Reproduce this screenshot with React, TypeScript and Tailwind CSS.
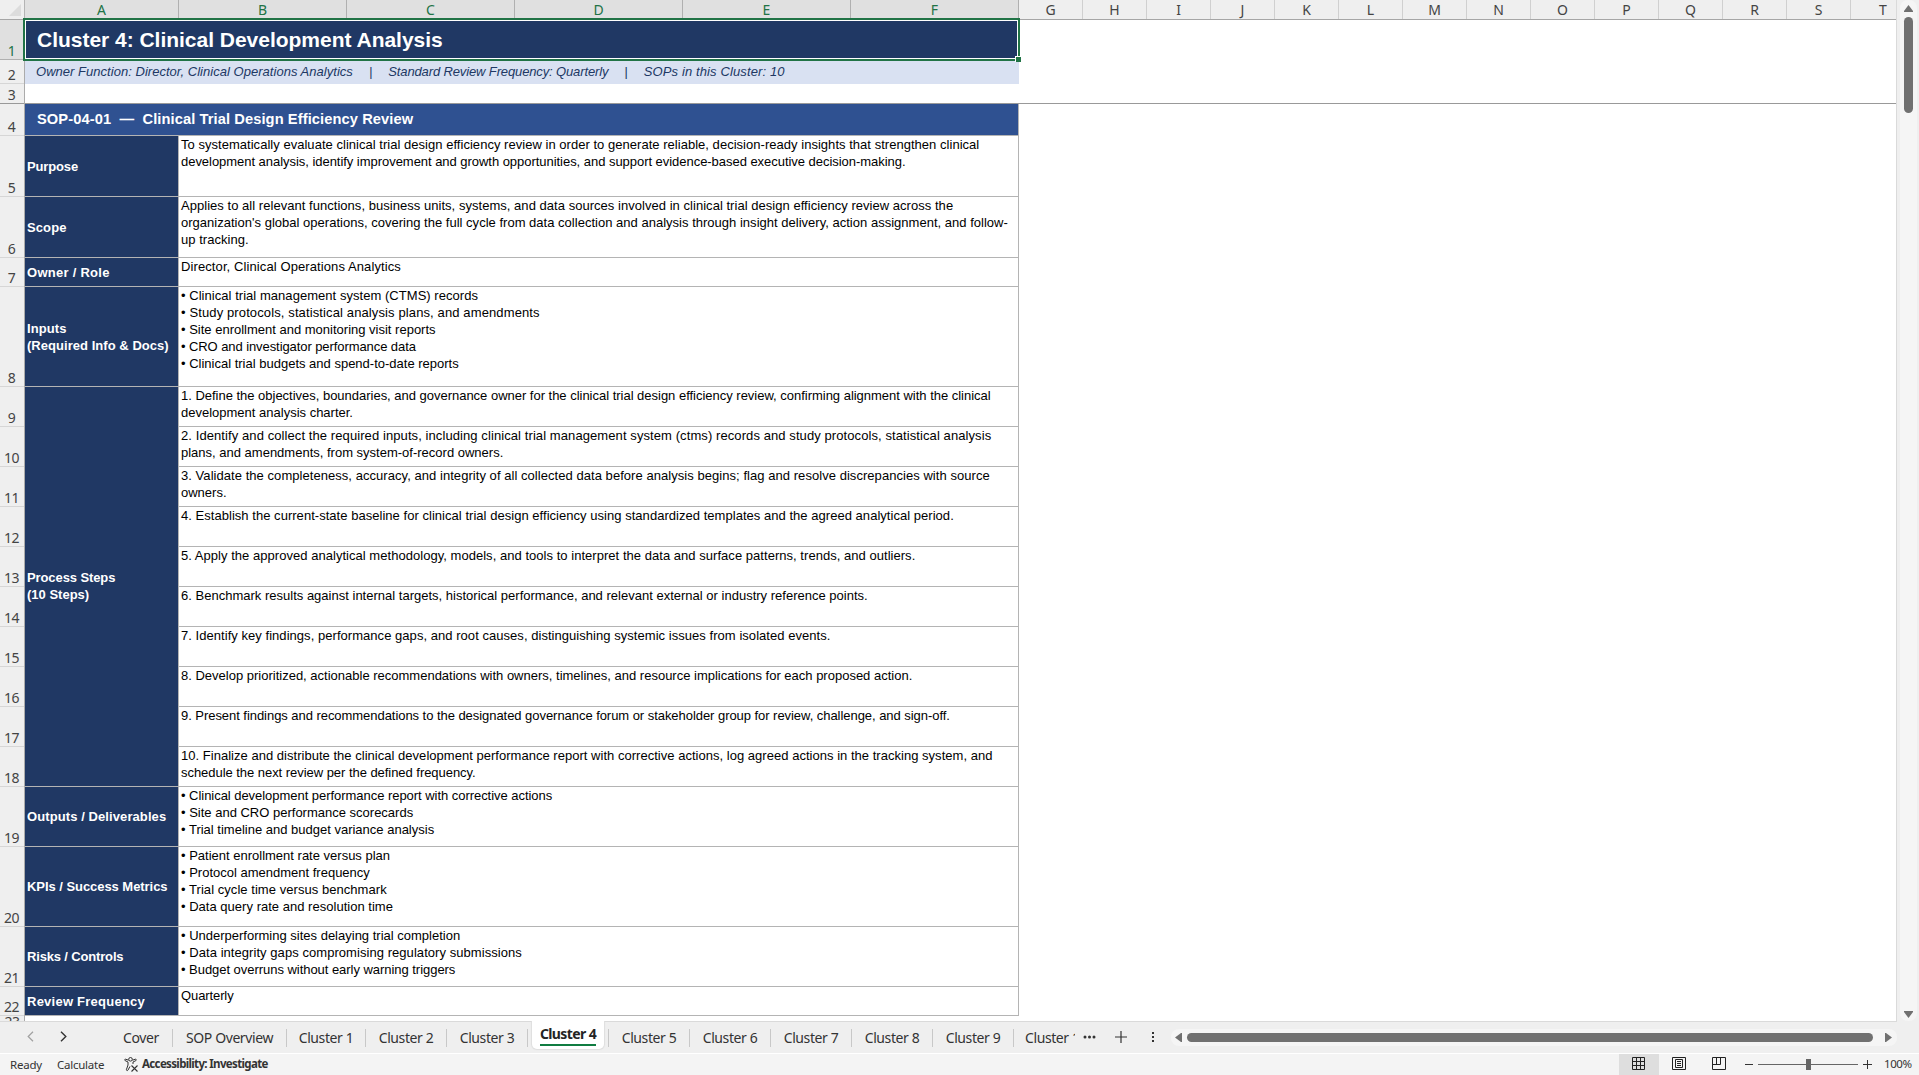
import clsx from 'clsx';
import type {ReactNode} from 'react';

type Column = {name: string; width: string; selected?: boolean};

const COLUMNS: Column[] = [
  {name: 'A', width: 'w-[154px]', selected: true},
  {name: 'B', width: 'w-[168px]', selected: true},
  {name: 'C', width: 'w-[168px]', selected: true},
  {name: 'D', width: 'w-[168px]', selected: true},
  {name: 'E', width: 'w-[168px]', selected: true},
  {name: 'F', width: 'w-[168px]', selected: true},
  ...'GHIJKLMNOPQRS'.split('').map((name) => ({name, width: 'w-[64px]'})),
];

type Line = [text: string, tracking: string];

type SheetRow = {n: number; height: string; label?: Line[]; lines: Line[]};

const TOP_ROWS: SheetRow[] = [
  {
    n: 5,
    height: 'h-[61px]',
    label: [['Purpose', 'tracking-[-0.14px]']],
    lines: [
      ['To systematically evaluate clinical trial design efficiency review in order to generate reliable, decision-ready insights that strengthen clinical', 'tracking-[0.03px]'],
      ['development analysis, identify improvement and growth opportunities, and support evidence-based executive decision-making.', 'tracking-[-0.038px]'],
    ],
  },
  {
    n: 6,
    height: 'h-[61px]',
    label: [['Scope', 'tracking-[0.1px]']],
    lines: [
      ['Applies to all relevant functions, business units, systems, and data sources involved in clinical trial design efficiency review across the', 'tracking-[0.036px]'],
      ["organization's global operations, covering the full cycle from data collection and analysis through insight delivery, action assignment, and follow-", 'tracking-[0.015px]'],
      ['up tracking.', 'tracking-[0.04px]'],
    ],
  },
  {
    n: 7,
    height: 'h-[29px]',
    label: [['Owner / Role', 'tracking-[0.27px]']],
    lines: [['Director, Clinical Operations Analytics', 'tracking-[0.1px]']],
  },
  {
    n: 8,
    height: 'h-[100px]',
    label: [
      ['Inputs', 'tracking-[0.1px]'],
      ['(Required Info & Docs)', 'tracking-[0.04px]'],
    ],
    lines: [
      ['• Clinical trial management system (CTMS) records', 'tracking-[0.042px]'],
      ['• Study protocols, statistical analysis plans, and amendments', 'tracking-[0.12px]'],
      ['• Site enrollment and monitoring visit reports', 'tracking-normal'],
      ['• CRO and investigator performance data', 'tracking-[-0.08px]'],
      ['• Clinical trial budgets and spend-to-date reports', 'tracking-normal'],
    ],
  },
];

const STEP_ROWS: SheetRow[] = [
  {
    n: 9,
    height: 'h-[40px]',
    lines: [
      ['1. Define the objectives, boundaries, and governance owner for the clinical trial design efficiency review, confirming alignment with the clinical', 'tracking-[-0.016px]'],
      ['development analysis charter.', 'tracking-normal'],
    ],
  },
  {
    n: 10,
    height: 'h-[40px]',
    lines: [
      ['2. Identify and collect the required inputs, including clinical trial management system (ctms) records and study protocols, statistical analysis', 'tracking-[0.087px]'],
      ['plans, and amendments, from system-of-record owners.', 'tracking-normal'],
    ],
  },
  {
    n: 11,
    height: 'h-[40px]',
    lines: [
      ['3. Validate the completeness, accuracy, and integrity of all collected data before analysis begins; flag and resolve discrepancies with source', 'tracking-[0.05px]'],
      ['owners.', 'tracking-normal'],
    ],
  },
  {
    n: 12,
    height: 'h-[40px]',
    lines: [
      ['4. Establish the current-state baseline for clinical trial design efficiency using standardized templates and the agreed analytical period.', 'tracking-[0.035px]'],
    ],
  },
  {
    n: 13,
    height: 'h-[40px]',
    lines: [
      ['5. Apply the approved analytical methodology, models, and tools to interpret the data and surface patterns, trends, and outliers.', 'tracking-[0.036px]'],
    ],
  },
  {
    n: 14,
    height: 'h-[40px]',
    lines: [
      ['6. Benchmark results against internal targets, historical performance, and relevant external or industry reference points.', 'tracking-[0.008px]'],
    ],
  },
  {
    n: 15,
    height: 'h-[40px]',
    lines: [
      ['7. Identify key findings, performance gaps, and root causes, distinguishing systemic issues from isolated events.', 'tracking-[0.043px]'],
    ],
  },
  {
    n: 16,
    height: 'h-[40px]',
    lines: [
      ['8. Develop prioritized, actionable recommendations with owners, timelines, and resource implications for each proposed action.', 'tracking-normal'],
    ],
  },
  {
    n: 17,
    height: 'h-[40px]',
    lines: [
      ['9. Present findings and recommendations to the designated governance forum or stakeholder group for review, challenge, and sign-off.', 'tracking-[-0.048px]'],
    ],
  },
  {
    n: 18,
    height: 'h-[40px]',
    lines: [
      ['10. Finalize and distribute the clinical development performance report with corrective actions, log agreed actions in the tracking system, and', 'tracking-[0.025px]'],
      ['schedule the next review per the defined frequency.', 'tracking-[-0.042px]'],
    ],
  },
];

const BOTTOM_ROWS: SheetRow[] = [
  {
    n: 19,
    height: 'h-[60px]',
    label: [['Outputs / Deliverables', 'tracking-[0.09px]']],
    lines: [
      ['• Clinical development performance report with corrective actions', 'tracking-[-0.04px]'],
      ['• Site and CRO performance scorecards', 'tracking-normal'],
      ['• Trial timeline and budget variance analysis', 'tracking-normal'],
    ],
  },
  {
    n: 20,
    height: 'h-[80px]',
    label: [['KPIs / Success Metrics', 'tracking-[-0.05px]']],
    lines: [
      ['• Patient enrollment rate versus plan', 'tracking-normal'],
      ['• Protocol amendment frequency', 'tracking-normal'],
      ['• Trial cycle time versus benchmark', 'tracking-[0.05px]'],
      ['• Data query rate and resolution time', 'tracking-[0.02px]'],
    ],
  },
  {
    n: 21,
    height: 'h-[60px]',
    label: [['Risks / Controls', 'tracking-[-0.16px]']],
    lines: [
      ['• Underperforming sites delaying trial completion', 'tracking-normal'],
      ['• Data integrity gaps compromising regulatory submissions', 'tracking-[0.056px]'],
      ['• Budget overruns without early warning triggers', 'tracking-[-0.04px]'],
    ],
  },
  {
    n: 22,
    height: 'h-[29px]',
    label: [['Review Frequency', 'tracking-[0.24px]']],
    lines: [['Quarterly', 'tracking-[-0.1px]']],
  },
];

const PROCESS_LABEL: Line[] = [
  ['Process Steps', 'tracking-[-0.1px]'],
  ['(10 Steps)', 'tracking-normal'],
];

const ROW_HEADERS = [
  {n: 1, height: 'h-[40px]', selected: true},
  {n: 2, height: 'h-[24px]'},
  {n: 3, height: 'h-[20px]'},
  {n: 4, height: 'h-[32px]'},
  ...[...TOP_ROWS, ...STEP_ROWS, ...BOTTOM_ROWS].map(({n, height}) => ({
    n,
    height,
    selected: false,
  })),
];

const TABS = [
  {name: 'Cover', width: 'w-[63px]'},
  {name: 'SOP Overview', width: 'w-[114px]'},
  {name: 'Cluster 1', width: 'w-[79px]'},
  {name: 'Cluster 2', width: 'w-[81px]'},
  {name: 'Cluster 3', width: 'w-[81px]'},
  {name: 'Cluster 4', width: 'w-[81px]', active: true},
  {name: 'Cluster 5', width: 'w-[81px]'},
  {name: 'Cluster 6', width: 'w-[81px]'},
  {name: 'Cluster 7', width: 'w-[81px]'},
  {name: 'Cluster 8', width: 'w-[81px]'},
  {name: 'Cluster 9', width: 'w-[81px]'},
];

function ColumnHeaders() {
  return (
    <div className="flex h-5 overflow-hidden border-b border-[#a6a6a6] bg-[#efefef] text-[14px] leading-[20px] text-[#444]">
      <div className="flex w-[25px] shrink-0 items-end justify-end border-r border-[#b4b4b4] pr-[3px] pb-[3px]">
        <svg width="12" height="12" viewBox="0 0 12 12">
          <path d="M12 0v12H0z" fill="#dcdcdc" />
        </svg>
      </div>
      {COLUMNS.map(({name, width, selected}) => (
        <div
          key={name}
          className={clsx(
            'shrink-0 border-r text-center',
            width,
            selected
              ? 'border-[#b0b0b0] bg-[#e0e0e0] text-[#217346]'
              : 'border-[#d0d0d0]',
          )}
        >
          {name}
        </div>
      ))}
      <div className="w-[64px] shrink-0 text-center">T</div>
    </div>
  );
}

function RowHeaders() {
  return (
    <div className="flex h-[1001px] w-[25px] shrink-0 flex-col overflow-hidden border-r border-[#ababab] bg-[#efefef] text-[14px] tracking-[-0.6px] text-[#444]">
      {ROW_HEADERS.map(({n, height, selected}) => (
        <div
          key={n}
          className={clsx(
            'flex shrink-0 items-end justify-center border-b pr-px leading-[16px]',
            height,
            selected
              ? 'border-[#b0b0b0] bg-[#e0e0e0] text-[#217346]'
              : n === 3
                ? 'border-[#999]'
                : 'border-[#d6d6d6]',
          )}
        >
          {n}
        </div>
      ))}
      <div className="-mt-[3px] text-center leading-[18px]">23</div>
    </div>
  );
}

function LabelCell({lines, height}: {lines: Line[]; height?: string}) {
  return (
    <div
      className={clsx(
        'flex w-[154px] shrink-0 flex-col justify-center border-r border-b border-[#b4b4b4] bg-[#203864] pl-[2px] font-bold whitespace-pre text-white',
        height ?? 'pb-[2px]',
      )}
    >
      {lines.map(([text, tracking]) => (
        <div key={text} className={tracking}>
          {text}
        </div>
      ))}
    </div>
  );
}

function TextCell({lines, height}: {lines: Line[]; height?: string}) {
  return (
    <div
      className={clsx(
        'w-[840px] shrink-0 border-r border-b border-[#b4b4b4] pl-[2px] whitespace-pre text-black',
        height,
      )}
    >
      {lines.map(([text, tracking]) => (
        <div key={text} className={tracking}>
          {text}
        </div>
      ))}
    </div>
  );
}

function Row({row}: {row: SheetRow}) {
  return (
    <div className={clsx('flex', row.height)}>
      <LabelCell lines={row.label ?? []} height={row.height} />
      <TextCell lines={row.lines} />
    </div>
  );
}

function Sheet() {
  return (
    <div className="relative flex h-[1001px] flex-1 flex-col bg-white font-['Liberation_Sans',Arial,sans-serif] text-[13px] leading-[17px]">
      <div className="relative flex h-[40px] w-[994px] shrink-0 items-center bg-[#203864] pb-[2px] pl-3 text-[21px] font-bold whitespace-pre text-white">
        <span className="tracking-[-0.02px]">Cluster 4: Clinical Development Analysis</span>
        {/* selection outline and fill handle */}
        <div className="absolute -top-[2px] -right-px -bottom-px -left-[2px] z-10 border-2 border-[#217346]">
          <div className="h-full border border-white" />
        </div>
        <div className="absolute -right-[2px] -bottom-[2px] z-10 size-[6px] border-t border-l border-white bg-[#217346]" />
      </div>
      <div className="flex h-[24px] w-[994px] shrink-0 items-center gap-4 bg-[#d9e1f2] pb-[2px] pl-[11px] whitespace-pre text-[#203864] italic">
        <span className="tracking-[0.03px]">Owner Function: Director, Clinical Operations Analytics</span>
        <span>|</span>
        <span className="tracking-[-0.13px]">Standard Review Frequency: Quarterly</span>
        <span>|</span>
        <span className="tracking-[0.12px]">SOPs in this Cluster: 10</span>
      </div>
      <div className="h-[20px] shrink-0 border-b border-[#999]" />
      <div className="flex h-[32px] w-[994px] shrink-0 items-center border-r border-b border-[#b4b4b4] bg-[#2f5191] pl-3 text-[14.67px] font-bold tracking-[0.09px] whitespace-pre text-white">
        {'SOP-04-01  —  Clinical Trial Design Efficiency Review'}
      </div>
      {TOP_ROWS.map((row) => (
        <Row key={row.n} row={row} />
      ))}
      <div className="flex">
        <LabelCell lines={PROCESS_LABEL} />
        <div>
          {STEP_ROWS.map(({n, lines, height}) => (
            <TextCell key={n} lines={lines} height={height} />
          ))}
        </div>
      </div>
      {BOTTOM_ROWS.map((row) => (
        <Row key={row.n} row={row} />
      ))}
    </div>
  );
}

function VerticalScrollbar() {
  return (
    <div className="flex w-[22px] shrink-0 flex-col bg-[#efefef] pl-[3px]">
      <div className="flex h-[1021px] w-[17px] flex-col items-center rounded-lg bg-[#f5f5f5] pt-[5px] pb-[3px]">
        <svg width="9" height="7" viewBox="0 0 9 7">
          <path d="M4.5 0 9 6v1H0V6z" fill="#707070" />
        </svg>
        <div className="mt-[5px] h-[96px] w-[9px] rounded-full bg-[#707070]" />
        <svg className="mt-auto" width="9" height="7" viewBox="0 0 9 7">
          <path d="M0 0h9v1L4.5 7 0 1z" fill="#707070" />
        </svg>
      </div>
    </div>
  );
}

function Separator() {
  return <div className="h-[18px] w-px bg-[#c8c8c8]" />;
}

function Tab({name, width, active}: {name: string; width: string; active?: boolean}) {
  if (active) {
    return (
      <div className={clsx('flex h-[32px] shrink-0 items-center justify-between pl-[4px]', width)}>
        <div className="-mt-px flex h-[28px] w-[72px] justify-center self-start rounded-b-[5px] bg-white shadow-[0_0_1px_1px_#dedede] [clip-path:inset(0_-2px_-2px_-2px)]">
          <div className="mt-[5px] h-[20px] border-b-2 border-[#107c41] text-[14px] leading-[15px] font-bold tracking-[-0.6px] text-[#242424]">
            {name}
          </div>
        </div>
        <Separator />
      </div>
    );
  }
  return (
    <div className={clsx('flex h-[32px] shrink-0 items-center', width)}>
      <div className="flex-1 pb-[2px] text-center tracking-[-0.4px]">{name}</div>
      <Separator />
    </div>
  );
}

function TabBar() {
  return (
    <div className="flex h-[33px] shrink-0 border-b border-white bg-[#efefef]">
      <div className="flex h-[32px] w-[1897px] border-t border-[#dadada] text-[14px] whitespace-nowrap text-[#333]">
        <div className="flex w-[110px] shrink-0 items-center pb-[2px] pl-[27px]">
          <svg width="7" height="11" viewBox="0 0 7 11" fill="none">
            <path d="M6 .8 1.2 5.5 6 10.2" stroke="#a0a0a0" strokeWidth="1.2" />
          </svg>
          <svg className="ml-[26px]" width="7" height="11" viewBox="0 0 7 11" fill="none">
            <path d="M1 .8l4.8 4.7L1 10.2" stroke="#333" strokeWidth="1.4" />
          </svg>
        </div>
        {TABS.map((tab) => (
          <Tab key={tab.name} {...tab} />
        ))}
        <div className="flex h-[32px] flex-1 items-center pb-[2px]">
          <div className="ml-[11px] w-[50px] overflow-hidden tracking-[-0.4px]">Cluster 10</div>
          <svg className="ml-[8px] shrink-0" width="13" height="4" viewBox="0 0 13 4" fill="#333">
            <circle cx="2" cy="2" r="1.5" />
            <circle cx="6.5" cy="2" r="1.5" />
            <circle cx="11" cy="2" r="1.5" />
          </svg>
          <svg className="ml-[19px] shrink-0" width="12" height="12" viewBox="0 0 12 12" stroke="#333">
            <path d="M6 0v12M0 6h12" strokeWidth="1.2" />
          </svg>
          <svg className="ml-[25px] shrink-0" width="2" height="12" viewBox="0 0 2 12" fill="#333">
            <path d="M0 1h2v2H0zM0 5h2v2H0zM0 9h2v2H0z" />
          </svg>
          <div className="ml-[17px] flex h-[17px] flex-1 items-center rounded-lg bg-[#f5f5f5] pr-[5px] pl-[4px]">
            <svg width="7" height="9" viewBox="0 0 7 9">
              <path d="M0 4.5 6 0h1v9H6z" fill="#707070" />
            </svg>
            <div className="mr-[12px] ml-[5px] h-[9px] flex-1 rounded-full bg-[#707070]" />
            <svg width="7" height="9" viewBox="0 0 7 9">
              <path d="M7 4.5 1 0H0v9h1z" fill="#707070" />
            </svg>
          </div>
        </div>
      </div>
    </div>
  );
}

function AccessibilityIcon() {
  return (
    <svg width="15" height="15" viewBox="0 0 15 15" fill="none" stroke="#333" strokeWidth="1">
      <circle cx="6.5" cy="2.3" r="1.8" />
      <path d="M4.6 3.2 1.6 2.2c-1-.2-1.3 1-.5 1.4L4 5v3l-1.6 4.6c-.2 1 1.2 1.4 1.6.5L6 9.4M8.4 3.2l3-1c1-.2 1.3 1 .5 1.4L9 5v2" />
      <path d="M7.5 8.5l6 6M13.5 8.5l-6 6" strokeWidth="1.1" />
    </svg>
  );
}

function ViewButton({children, active}: {children: ReactNode; active?: boolean}) {
  return (
    <div
      className={clsx(
        'flex h-full w-[40px] items-center justify-center pb-[2px]',
        active && 'bg-[#dedede]',
      )}
    >
      <svg width="14" height="13" viewBox="0 0 14 13" fill="none" stroke="#222">
        {children}
      </svg>
    </div>
  );
}

function StatusBar() {
  return (
    <div className="flex h-[21px] shrink-0 items-center bg-[#f4f4f4] text-[11.5px] whitespace-nowrap text-[#333]">
      <span className="ml-[10px] w-[47px] tracking-[-0.2px]">Ready</span>
      <span className="w-[67px] tracking-[-0.25px]">Calculate</span>
      <AccessibilityIcon />
      <span className="ml-[3px] pb-px font-bold tracking-[-0.65px]">Accessibility: Investigate</span>
      <div className="ml-auto flex h-full items-center">
        <ViewButton active>
          <path d="M.5.5h12v12H.5zM.5 4.5h12M.5 8.5h12M4.5.5v12M8.5.5v12" />
        </ViewButton>
        <ViewButton>
          <path d="M.5.5h13v12H.5zM3.5 2.5h7v8h-7zM5 4.5h4M5 6.5h4M5 8.5h4" />
        </ViewButton>
        <ViewButton>
          <path d="M.5.5h13v12H.5zM.5 7.5h8v-7M4.5.5v7" />
        </ViewButton>
        <div className="mb-px ml-[6px] h-px w-[8px] bg-[#333]" />
        <div className="mx-[5px] flex h-[11px] w-[100px] items-center justify-center bg-[linear-gradient(#666,#666)] bg-[length:100%_1px] bg-center bg-no-repeat">
          <div className="h-[11px] w-[5px] bg-[#666]" />
        </div>
        <svg className="mb-px" width="9" height="9" viewBox="0 0 9 9" stroke="#333">
          <path d="M4.5 0v9M0 4.5h9" />
        </svg>
        <span className="ml-[12px] w-[35px] pb-px tracking-[-0.4px]">100%</span>
      </div>
    </div>
  );
}

export default function App() {
  return (
    <div className="flex h-[1075px] w-[1919px] flex-col overflow-hidden bg-[#efefef] font-['Noto_Sans','Open_Sans',sans-serif]">
      <div className="flex h-[1021px] shrink-0">
        <div className="flex w-[1897px] shrink-0 flex-col border-r border-[#dadada]">
          <ColumnHeaders />
          <div className="flex">
            <RowHeaders />
            <Sheet />
          </div>
        </div>
        <VerticalScrollbar />
      </div>
      <TabBar />
      <StatusBar />
    </div>
  );
}
